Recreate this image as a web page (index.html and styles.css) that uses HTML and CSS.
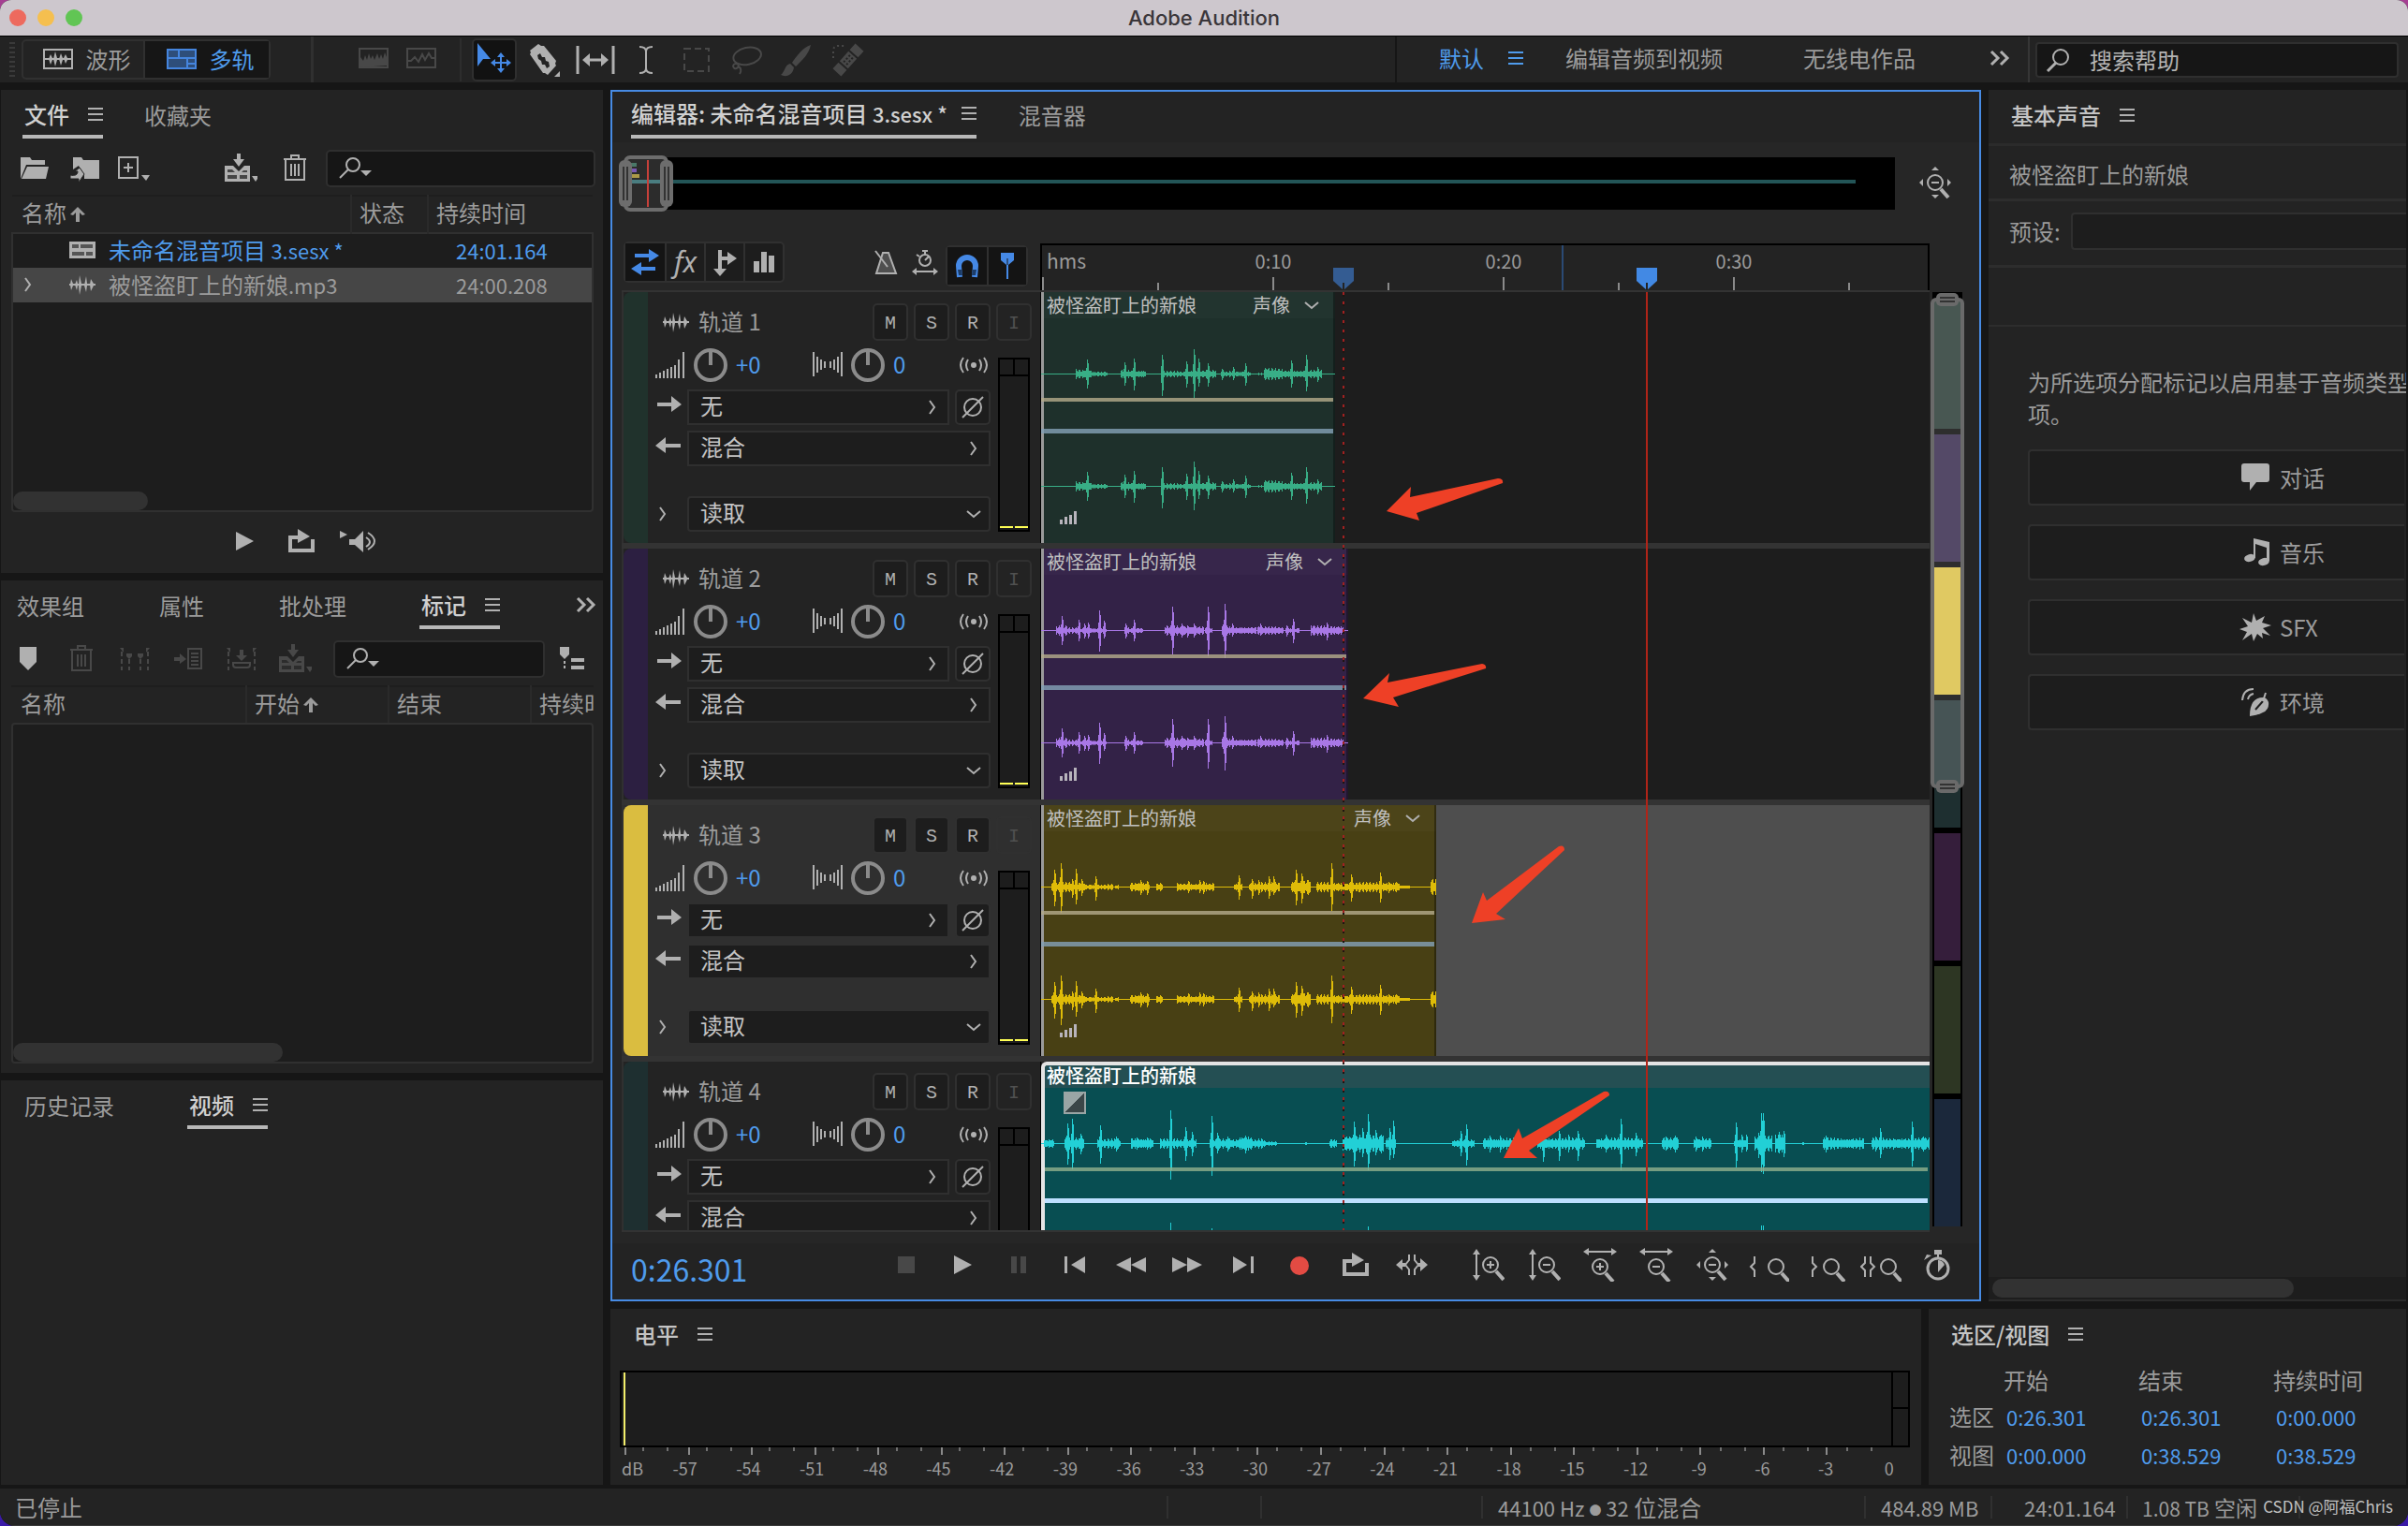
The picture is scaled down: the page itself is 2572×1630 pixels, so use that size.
FILE: index.html
```html
<!DOCTYPE html>
<html lang="zh-CN">
<head>
<meta charset="utf-8">
<title>Adobe Audition</title>
<link rel="stylesheet" href="styles.css">
<script src="app.js" defer></script>
</head>
<body>
<svg class="sprite" aria-hidden="true">
  <symbol id="menu" viewBox="0 0 16 14"><path d="M0 1h16M0 7h16M0 13h16" stroke="currentColor" stroke-width="2"/></symbol>
  <symbol id="more" viewBox="-18 -18 36 36"><path d="M-9-7l7 7-7 7M1-7l7 7-7 7" fill="none" stroke="currentColor" stroke-width="3"/></symbol>
  <symbol id="wave" viewBox="-18 -18 36 36"><path d="M-14-1h28v2h-28zM-12-6l2 5v2l-2 5-1-6zM-6-5l1 4v2l-1 5-2-6zM-3-10l2 9v2l-2 10-1-10zM4-9l1 8v2l-1 7-2-7zM9-6l3 5v2l-3 6-1-7z"/></symbol>
  <symbol id="waveform" viewBox="-18 -18 36 36"><path d="M-15-10h30v20h-30z" fill="none" stroke="currentColor" stroke-width="2"/><path d="M-14-1h28v2h-28zM-8-5l2 4v2l-2 5-2-6zM-3-8l2 7v2l-2 7-2-8zM3-6l2 5v2l-2 6-2-7zM8-5l2 4v2l-2 4-2-6z"/></symbol>
  <symbol id="multi" viewBox="-18 -18 36 36"><path d="M-15-10h30v20h-30z" fill="currentColor" fill-opacity=".5" stroke="currentColor" stroke-width="2"/><path d="M-15-1h30M-3-10v9M6 0v10M6 5h9" fill="none" stroke="currentColor" stroke-width="2"/></symbol>
  <symbol id="session" viewBox="-18 -18 36 36"><path d="M-14-9h28v18h-28z"/><path d="M-11-6h7v4h-7zM-2-6h13v4h-13zM-11 2h13v4h-13zM4 2h7v4h-7z" fill="#555"/></symbol>
  <symbol id="spectral" viewBox="-18 -18 36 36"><path d="M-15-10h30v20h-30z" fill="none" stroke="currentColor" stroke-width="2"/><path d="M-14 10V-1l3 4 2-6 2 5 2-7 2 6 2-4 2 5 3-7 2 6 2-5 2 5 2-7 2 5v9z"/></symbol>
  <symbol id="pitch" viewBox="-18 -18 36 36"><path d="M-15-10h30v20h-30z" fill="none" stroke="currentColor" stroke-width="2"/><path d="M-14 3h3l4-4 4 5 4-8 3 6 4-7 3 5h3" fill="none" stroke="currentColor" stroke-width="2"/></symbol>
  <symbol id="move" viewBox="-18 -18 36 36"><path d="M-18-18L-4-1h-8l-6 8z"/><path d="M7-8l4 5H8v5h5v-3l5 4-5 4V4H8v5h3l-4 5-4-5h3V4H1v3l-5-4 5-4v3h5v-5H3z"/></symbol>
  <symbol id="razor" viewBox="-18 -18 36 36"><path d="M-7-17l3 2 3 0 13 16-1 3 1 2-9 10-3-2h-2l-14-20 1-2-1-2z"/><path d="M-8-5l3-2 2 4h3l1 4 3 1 1 5-3 2-2-4h-3l-1-4-3-2z" fill="#232323"/><path d="M16 12v7h-7z"/></symbol>
  <symbol id="slip" viewBox="-22 -18 44 36"><path d="M-19-15v30M19-15v30M-10 0h20" stroke="currentColor" stroke-width="3"/><path d="M-14 0l8-7v14zM14 0l-8-7v14z"/></symbol>
  <symbol id="ibeam" viewBox="-18 -18 36 36"><path d="M-7-14c5 0 7 2 7 5V9c0 3-2 5-7 5M7-14c-5 0-7 2-7 5V9c0 3 2 5 7 5" fill="none" stroke="currentColor" stroke-width="2"/></symbol>
  <symbol id="marquee" viewBox="-18 -18 36 36"><path d="M-13-12h26v24h-26z" fill="none" stroke="currentColor" stroke-width="2" stroke-dasharray="7 4"/></symbol>
  <symbol id="lasso" viewBox="-18 -18 36 36"><ellipse cx="1" cy="-4" rx="15" ry="9" transform="rotate(-12)" fill="none" stroke="currentColor" stroke-width="2"/><path d="M-15 6c2-4 8-1 5 2s-5 0-5-2m5 1c4 1 4 5 2 8" fill="none" stroke="currentColor" stroke-width="2"/></symbol>
  <symbol id="brush" viewBox="-18 -18 36 36"><path d="M14-16C6-14-2-3-6 3l4 4C5 0 12-6 14-16zM-8 4c-6 1-5 8-10 12 6 3 13 0 14-8z"/></symbol>
  <symbol id="heal" viewBox="-18 -18 36 36"><g transform="rotate(42)"><path d="M-6-18H6v9H-6zM-6-7H6V7H-6zM-6 9H6v9H-6z"/><path d="M-3-4h2m2 0h2M-3 0h2m2 0h2M-3 4h2m2 0h2" stroke="#232323" stroke-width="2"/></g><path d="M-16-2v-9q1-4 5-4h7" fill="none" stroke="currentColor" stroke-width="2" stroke-dasharray="2 3"/></symbol>
  <symbol id="find" viewBox="-18 -18 36 36"><circle cx="3" cy="-3" r="8" fill="none" stroke="currentColor" stroke-width="2"/><path d="M-2 3l-9 9" stroke="currentColor" stroke-width="3"/></symbol>
  <symbol id="findmenu" viewBox="-18 -18 36 36"><circle cx="-3" cy="-4" r="7" fill="none" stroke="currentColor" stroke-width="2"/><path d="M-8 1l-9 9" stroke="currentColor" stroke-width="2"/><path d="M5 2h12l-6 6z"/></symbol>
  <symbol id="open" viewBox="-18 -18 36 36"><path d="M-15 11v-23h10l2 3h14v5h-20zM-8-2h23l-3 13h-26z"/></symbol>
  <symbol id="import" viewBox="-18 -18 36 36"><path d="M-12-12h9l2 3h17v20H0V7L-6-3l-6 4z"/><path d="M-15 7c5 1 8 0 8-4l-3 0 5-4 5 7-6 9V11h-9z" stroke="#232323"/></symbol>
  <symbol id="new" viewBox="-18 -18 36 36"><path d="M-16-12h20v22h-20zM-6-6V4M-11-1h10" fill="none" stroke="currentColor" stroke-width="2"/><path d="M8 7h9l-4 6z"/></symbol>
  <symbol id="insert" viewBox="-18 -18 36 36"><path d="M-17-3h9l6 6 6-6h6v17h-27z"/><path d="M-4-16h4v6h4l-6 8-6-8h4z"/><path d="M-14 1h5l3 3h-8zM3 2h4v2H1zM-14 7H-4v4h-10zM-1 7h8v4h-8z" fill="#232323" fill-opacity=".75"/><path d="M12 8h8l-4 6z"/></symbol>
  <symbol id="trash" viewBox="-18 -18 36 36"><path d="M-12-10h24M-10-9v21h20V-9M-4-11v-3h8v3M-4-5V8M0-5V8M4-5V8" fill="none" stroke="currentColor" stroke-width="2"/></symbol>
  <symbol id="sortup" viewBox="0 0 16 16"><path d="M8 0l8 8-3 1-3-3v10H6V6L3 9 0 8z"/></symbol>
  <symbol id="play" viewBox="-18 -18 36 36"><path d="M-9-10L10 0-9 10z"/></symbol>
  <symbol id="loop" viewBox="-18 -18 36 36"><path d="M-12-4H-2M12-2v12h-24V-6" fill="none" stroke="currentColor" stroke-width="4"/><path d="M-4-13l13 8L-4 2z"/></symbol>
  <symbol id="autoplay" viewBox="-22 -18 44 36"><path d="M-20-11l8 4-8 4zM-10-2h6l9-9v23l-9-8h-6z"/><path d="M8-4q8 5 0 10M10-9q14 9 0 18" fill="none" stroke="currentColor" stroke-width="2"/></symbol>
  <symbol id="marker" viewBox="-18 -18 36 36"><path d="M-9-13H9V3L0 12-9 3z"/></symbol>
  <symbol id="mergemk" viewBox="-18 -18 36 36"><path d="M-14-8v20M14-8v20M-6 0v12M6 0v12" stroke="currentColor" stroke-width="2" stroke-dasharray="5 3"/><path d="M-16-12h4v5zM16-12h-4v5zM-9-6h6v3l-3 3-3-3zM3-6h6v3L6 0 3-3z"/></symbol>
  <symbol id="addlist" viewBox="-18 -18 36 36"><path d="M0-11h14v21H0zM3-6h8M3-2h8M3 2h8M3 6h8" fill="none" stroke="currentColor" stroke-width="2"/><path d="M-15-2h6v-4l7 6-7 5V2h-6z"/></symbol>
  <symbol id="export" viewBox="-18 -18 36 36"><path d="M-14-8v20M14-8v20" stroke="currentColor" stroke-width="2" stroke-dasharray="5 3"/><path d="M-16-12h4v5zM16-12h-4v5zM-2-10h4v6h4l-6 6-6-6h4z"/><path d="M-9 4v2q0 3 3 3H6q3 0 3-3V4z" fill="none" stroke="currentColor" stroke-width="2"/></symbol>
  <symbol id="mklist" viewBox="-18 -18 36 36"><path d="M-13-13h10v8l-5 5-5-5z"/><path d="M-8 2v10" stroke="currentColor" stroke-width="2" stroke-dasharray="3 2"/><path d="M-1 1h14M-1 9h14" stroke="currentColor" stroke-width="4"/></symbol>
  <symbol id="io" viewBox="-18 -18 36 36"><path d="M-11-9H4v-5l11 7L4 0v-5h-15zM11 5H-4V0l-11 7 11 7V9h15z"/></symbol>
  <symbol id="sends" viewBox="-18 -18 36 36"><path d="M-7-13h4v7h6v-5l10 7L3 3v-5h-6v9h5L-5 15l-7-8h5z"/></symbol>
  <symbol id="bars" viewBox="-18 -18 36 36"><path d="M-11-1h6v12h-6zM-3-11h6v22h-6zM5-7h6v18H5z"/></symbol>
  <symbol id="metronome" viewBox="-18 -18 36 36"><path d="M-4-12h6l8 22h-21z" fill="currentColor" fill-opacity=".3" stroke="currentColor" stroke-width="2"/><path d="M-12-14L1 3" stroke="currentColor" stroke-width="2"/></symbol>
  <symbol id="stretch" viewBox="-18 -18 36 36"><circle cy="-4" r="6" fill="none" stroke="currentColor" stroke-width="2"/><path d="M-3-14h6M0-14v4M0-4l4-4M-9-10l3 2M-10 8h20" stroke="currentColor" stroke-width="2"/><path d="M-14 8l5-4v8zM14 8l-5-4v8z"/></symbol>
  <symbol id="magnet" viewBox="-18 -18 36 36"><path d="M-8 12L-9 0a9 9 0 0 1 18 0L8 12" fill="none" stroke="currentColor" stroke-width="6"/><path d="M-10 4h4l1 6h-4zM10 4H6L5 10h4z" fill="#1d3d68"/></symbol>
  <symbol id="pin" viewBox="-18 -18 36 36"><path d="M-7-14H7v8L1-1v15h-2V-1l-6-5z"/><path d="M0-8v7" stroke="#161616"/></symbol>
  <symbol id="vol" viewBox="-18 -18 36 36"><path d="M-15 10v4M-11 8v6M-7 6v8M-3 4v10M1 2v12M5 0v14M9-6v20M14-14v28" stroke="currentColor" stroke-width="2"/></symbol>
  <symbol id="pan" viewBox="-18 -18 36 36"><path d="M-15-14v26M-11-9v17M-7-6v11M-3-4v7M3-4v7M7-6v11M11-9v17M15-14v26" stroke="currentColor" stroke-width="2"/></symbol>
  <symbol id="knob" viewBox="-18 -18 36 36"><circle r="16" fill="none" stroke="#8b8b8b" stroke-width="4"/><path d="M0-16V0" stroke="#8b8b8b" stroke-width="4"/></symbol>
  <symbol id="mono" viewBox="-18 -18 36 36"><circle r="3"/><path d="M-6-6q-4 6 0 12M6-6q4 6 0 12M-11-8q-6 8 0 16M11-8q6 8 0 16" fill="none" stroke="currentColor" stroke-width="2"/></symbol>
  <symbol id="right" viewBox="-18 -18 36 36"><path d="M-13-2H2v-7L13 0 2 8V2h-15z"/></symbol>
  <symbol id="left" viewBox="-18 -18 36 36"><path d="M12-2H-4v-7L-15 0-4 8V2h16z"/></symbol>
  <symbol id="phase" viewBox="-18 -18 36 36"><circle r="9" fill="none" stroke="currentColor" stroke-width="2"/><path d="M-11 11L11-11" stroke="currentColor" stroke-width="2"/></symbol>
  <symbol id="chevr" viewBox="-8 -8 16 16"><path d="M-3-7l5 7-5 7" fill="none" stroke="currentColor" stroke-width="2"/></symbol>
  <symbol id="chevd" viewBox="-8 -8 16 16"><path d="M-7-3l7 6 7-6" fill="none" stroke="currentColor" stroke-width="2"/></symbol>
  <symbol id="signal" viewBox="0 0 18 14"><path d="M0 9h3v5H0zM5 6h3v8H5zM10 4h3v10h-3zM15 0h3v14h-3z"/></symbol>
  <symbol id="stop" viewBox="-18 -18 36 36"><path d="M-9-9H9V9H-9z"/></symbol>
  <symbol id="pause" viewBox="-18 -18 36 36"><path d="M-8-9h6V9h-6zM2-9h6V9H2z"/></symbol>
  <symbol id="prev" viewBox="-18 -18 36 36"><path d="M-11-9h3V9h-3zM11-9V9L-4 0z"/></symbol>
  <symbol id="next" viewBox="-18 -18 36 36"><path d="M11-9H8V9h3zM-11-9V9L4 0z"/></symbol>
  <symbol id="rew" viewBox="-18 -18 36 36"><path d="M-16 0L0-8V8zM0 0l16-8V8z"/></symbol>
  <symbol id="fwd" viewBox="-18 -18 36 36"><path d="M16 0L0-8V8zM0 0l-16-8V8z"/></symbol>
  <symbol id="rec" viewBox="-18 -18 36 36"><circle cy="1" r="10"/></symbol>
  <symbol id="skip" viewBox="-18 -18 36 36"><path d="M-3-11v6l-4 5 4 5v6M3-11v6l4 5-4 5v6" fill="none" stroke="currentColor" stroke-width="2"/><path d="M-17 0l7-6v4h3v4h-3v4zM17 0L9-7v5H7v4h2v5z"/></symbol>
  <symbol id="mag" viewBox="-18 -18 36 36"><circle r="8" fill="none" stroke="currentColor" stroke-width="2"/><path d="M6 7l8 9" stroke="currentColor" stroke-width="4"/></symbol>
  <symbol id="zvin" viewBox="-18 -18 36 36"><use href="#mag" x="-15" y="-18" width="36" height="36"/><path d="M3-4v8M-1 0h8M-12-13v26" stroke="currentColor" stroke-width="2"/><path d="M-12-17l4 6h-8zM-12 17l4-6h-8z"/></symbol>
  <symbol id="zvout" viewBox="-18 -18 36 36"><use href="#mag" x="-15" y="-18" width="36" height="36"/><path d="M-1 0h8M-12-13v26" stroke="currentColor" stroke-width="2"/><path d="M-12-17l4 6h-8zM-12 17l4-6h-8z"/></symbol>
  <symbol id="zhin" viewBox="-18 -18 36 36"><use href="#mag" x="-18" y="-16" width="36" height="36"/><path d="M0-2v8M-4 2h8M-13-14h26" stroke="currentColor" stroke-width="2"/><path d="M-18-14l6-4v8zM18-14l-6-4v8z"/></symbol>
  <symbol id="zhout" viewBox="-18 -18 36 36"><use href="#mag" x="-18" y="-16" width="36" height="36"/><path d="M-4 2h8M-13-14h26" stroke="currentColor" stroke-width="2"/><path d="M-18-14l6-4v8zM18-14l-6-4v8z"/></symbol>
  <symbol id="zfull" viewBox="-18 -18 36 36"><use href="#mag" x="-18" y="-18" width="36" height="36"/><path d="M-4 0h8" stroke="currentColor" stroke-width="2"/><path d="M0-17l4 4h-8zM0 17l4-4h-8zM-17 0l4-4v8zM17 0l-4-4v8z"/></symbol>
  <symbol id="zin" viewBox="-22 -18 44 36"><use href="#mag" x="-10" y="-16" width="36" height="36"/><path d="M-15-9v7l-4 4 4 4v7" fill="none" stroke="currentColor" stroke-width="2"/></symbol>
  <symbol id="zoutp" viewBox="-22 -18 44 36"><use href="#mag" x="-11" y="-16" width="36" height="36"/><path d="M-13-9v7l4 4-4 4v7" fill="none" stroke="currentColor" stroke-width="2"/></symbol>
  <symbol id="zsel" viewBox="-22 -18 44 36"><use href="#mag" x="-10" y="-16" width="36" height="36"/><path d="M-17-9v7l-4 4 4 4v7M-11-9v7l4 4-4 4v7" fill="none" stroke="currentColor" stroke-width="2"/></symbol>
  <symbol id="timer" viewBox="-18 -18 36 36"><circle cx="1" cy="4" r="11" fill="none" stroke="currentColor" stroke-width="3"/><path d="M-3-16h8v5H2v4H0v-4h-3zM-14-5l3-6 5 1zM1 8v-13q5 0 7 5z"/></symbol>
  <symbol id="speech" viewBox="-18 -18 36 36"><path d="M-12-15h24q3 0 3 3V2q0 3-3 3H1l-7 9V5h-6q-3 0-3-3v-14q0-3 3-3z"/></symbol>
  <symbol id="music" viewBox="-18 -18 36 36"><path d="M-2-15l17 4V9h-3V-5L0-9V6h-2z"/><ellipse cx="-6" cy="6" rx="6" ry="4" transform="rotate(-15 -6 6)"/><ellipse cx="9" cy="10" rx="6" ry="4" transform="rotate(-15 9 10)"/></symbol>
  <symbol id="burst" viewBox="-18 -18 36 36"><path d="M-2-15l3 8 9-5-3 7 10 3-9 3 8 8-9-3 1 6-6-5-4 8-2-8-10 7 5-9-8-3 9-3-6-9 10 5z"/></symbol>
  <symbol id="leaf" viewBox="-18 -18 36 36"><path d="M-6 15Q-6-5 8-5q4 0 6 5 1 8-6 11-5 3-14 4z"/><path d="M0 8l8-9" stroke="#1d1d1d" stroke-width="2"/><path d="M8-1l3-9M-14-2Q-13-14-2-14M-8-3q1-5 6-6" fill="none" stroke="currentColor" stroke-width="2"/></symbol>
</svg>

<div class="app">
  <header class="titlebar">
    <div class="lights"><i></i><i></i><i></i></div>
    <h1>Adobe Audition</h1>
  </header>

  <nav class="topbar">
    <span class="grip"></span>
    <div class="modes">
      <button class="mode"><svg class="i"><use href="#waveform"/></svg>波形</button>
      <button class="mode on"><svg class="i"><use href="#multi"/></svg>多轨</button>
    </div>
    <div class="views dim">
      <button class="tool"><svg class="i"><use href="#spectral"/></svg></button>
      <button class="tool"><svg class="i"><use href="#pitch"/></svg></button>
    </div>
    <div class="tools">
      <button class="tool on"><svg class="i"><use href="#move"/></svg></button>
      <button class="tool"><svg class="i"><use href="#razor"/></svg></button>
      <button class="tool"><svg class="i wide"><use href="#slip"/></svg></button>
      <button class="tool"><svg class="i"><use href="#ibeam"/></svg></button>
      <button class="tool dim"><svg class="i"><use href="#marquee"/></svg></button>
      <button class="tool dim"><svg class="i"><use href="#lasso"/></svg></button>
      <button class="tool dim"><svg class="i"><use href="#brush"/></svg></button>
      <button class="tool dim"><svg class="i"><use href="#heal"/></svg></button>
    </div>
    <div class="spaces">
      <a href="#" class="on">默认 <svg class="m"><use href="#menu"/></svg></a>
      <a href="#">编辑音频到视频</a>
      <a href="#">无线电作品</a>
      <button class="tool"><svg class="i"><use href="#more"/></svg></button>
    </div>
    <label class="help"><svg class="i"><use href="#find"/></svg><input type="text" placeholder="搜索帮助" aria-label="搜索帮助"></label>
  </nav>

  <main class="main">
    <aside class="side">
      <section class="panel files">
        <div class="tabs"><a href="#" class="tab on">文件 <svg class="m"><use href="#menu"/></svg></a><a href="#" class="tab">收藏夹</a></div>
        <div class="bar">
          <button><svg class="i"><use href="#open"/></svg></button>
          <button><svg class="i"><use href="#import"/></svg></button>
          <button><svg class="i"><use href="#new"/></svg></button>
          <button class="push"><svg class="i"><use href="#insert"/></svg></button>
          <button><svg class="i"><use href="#trash"/></svg></button>
          <label class="search"><svg class="i"><use href="#findmenu"/></svg><input type="text" aria-label="搜索文件"></label>
        </div>
        <table class="list">
          <thead><tr><th class="c-name">名称<svg class="s"><use href="#sortup"/></svg></th><th class="c-state">状态</th><th>持续时间</th></tr></thead>
          <tbody>
            <tr class="cur"><td><span class="fname"><span class="twist"></span><svg class="i"><use href="#session"/></svg><span>未命名混音项目 <span class="num">3.sesx *</span></span></span></td><td></td><td class="num time">24:01.164</td></tr>
            <tr class="sel"><td><span class="fname"><span class="twist"><svg class="c"><use href="#chevr"/></svg></span><svg class="i"><use href="#wave"/></svg><span>被怪盗盯上的新娘<span class="num">.mp3</span></span></span></td><td></td><td class="num time">24:00.208</td></tr>
          </tbody>
        </table>
        <div class="well"><span class="thumb"></span></div>
        <div class="preview">
          <button><svg class="i"><use href="#play"/></svg></button>
          <button><svg class="i"><use href="#loop"/></svg></button>
          <button><svg class="i wide"><use href="#autoplay"/></svg></button>
        </div>
      </section>

      <section class="panel marks">
        <div class="tabs"><a href="#" class="tab">效果组</a><a href="#" class="tab">属性</a><a href="#" class="tab">批处理</a><a href="#" class="tab on">标记 <svg class="m"><use href="#menu"/></svg></a><button class="over"><svg class="i"><use href="#more"/></svg></button></div>
        <div class="bar">
          <button><svg class="i"><use href="#marker"/></svg></button>
          <button class="dim"><svg class="i"><use href="#trash"/></svg></button>
          <button class="dim"><svg class="i"><use href="#mergemk"/></svg></button>
          <button class="dim"><svg class="i"><use href="#addlist"/></svg></button>
          <button class="dim"><svg class="i"><use href="#export"/></svg></button>
          <button class="dim"><svg class="i"><use href="#insert"/></svg></button>
          <label class="search"><svg class="i"><use href="#findmenu"/></svg><input type="text" aria-label="搜索标记"></label>
          <button class="last"><svg class="i"><use href="#mklist"/></svg></button>
        </div>
        <table class="list">
          <thead><tr><th class="m-name">名称</th><th class="m-col">开始<svg class="s"><use href="#sortup"/></svg></th><th class="m-col">结束</th><th>持续时间</th></tr></thead>
        </table>
        <div class="well closed"><span class="thumb long"></span></div>
      </section>

      <section class="panel video">
        <div class="tabs"><a href="#" class="tab">历史记录</a><a href="#" class="tab on">视频 <svg class="m"><use href="#menu"/></svg></a></div>
      </section>
    </aside>

    <section class="panel editor">
      <div class="tabs"><a href="#" class="tab on"><span>编辑器: 未命名混音项目 <span class="num">3.sesx *</span></span> <svg class="m"><use href="#menu"/></svg></a><a href="#" class="tab">混音器</a></div>
      <div class="overview">
        <div class="map">
          <span class="mapline"></span>
          <svg class="handle" viewBox="0 0 58 60"><rect x="7" y="2" width="44" height="56" rx="5" fill="#2c2c2c" stroke="#6d6d6d" stroke-width="4"/><path d="M13 8h6v4h-6z" fill="#4a7868"/><path d="M13 14h6v4h-6z" fill="#7a58b4"/><path d="M13 20h9v4h-9z" fill="#ac9a48"/><path d="M13 26h31v4H13z" fill="#4a7d80"/><path d="M31 5v50" stroke="#c8403a" stroke-width="2"/><rect x="0" y="5" width="14" height="50" rx="6" fill="#6d6d6d"/><rect x="44" y="5" width="14" height="50" rx="6" fill="#6d6d6d"/><path d="M5 12v36M9 12v36M49 12v36M53 12v36" stroke="#333" stroke-width="2"/></svg>
        </div>
        <button class="fit"><svg class="i"><use href="#zfull"/></svg></button>
      </div>

      <div class="work">
        <div class="toggles">
          <div class="group">
            <button class="on"><svg class="i"><use href="#io"/></svg></button>
            <button class="fx">fx</button>
            <button><svg class="i"><use href="#sends"/></svg></button>
            <button><svg class="i"><use href="#bars"/></svg></button>
          </div>
          <div class="plain">
            <button><svg class="i"><use href="#metronome"/></svg></button>
            <button><svg class="i"><use href="#stretch"/></svg></button>
          </div>
          <div class="group snap">
            <button class="on"><svg class="i"><use href="#magnet"/></svg></button>
            <button class="on"><svg class="i"><use href="#pin"/></svg></button>
          </div>
        </div>
        <div class="ruler">
          <span class="unit">hms</span>
          <div class="stamps"><span>0:10</span><span>0:20</span><span>0:30</span></div>
          <span class="ghost"></span>
          <svg class="flag old" viewBox="0 0 22 24"><path d="M0 0h22v14L11 24 0 14z"/><path d="M11 16v8" stroke="#232323" stroke-width="2"/></svg>
          <svg class="flag now" viewBox="0 0 22 24"><path d="M0 0h22v14L11 24 0 14z"/><path d="M11 16v8" stroke="#232323" stroke-width="2"/></svg>
        </div>
        <div class="tracks" id="tracks">
          <span class="dash"></span><span class="playhead"></span>
          <svg class="notes" viewBox="1111 312 949 1002"><path d="M1481 546l26-26-1 11 94-20q6 0 5 5l-92 32 3 8zM1456 746l28-27-2 10 101-20q5 1 4 5l-99 31 6 10zM1572 986l12-33 4 9 77-58q6-2 6 4l-73 68 10 6zM1606 1237l16-32 4 11 87-50q6-1 6 4l-86 59 9 8z"/></svg>
        </div>
        <div class="navi">
          <i class="t1"></i><i class="t2"></i><i class="t3"></i><i class="t4"></i><i class="t5"></i><i class="t6"></i><i class="t7"></i>
          <span class="frame"></span>
        </div>
      </div>

      <div class="transport">
        <output class="clock">0:26.301</output>
        <div class="keys">
          <button class="dim"><svg class="i"><use href="#stop"/></svg></button>
          <button><svg class="i"><use href="#play"/></svg></button>
          <button class="dim"><svg class="i"><use href="#pause"/></svg></button>
          <button><svg class="i"><use href="#prev"/></svg></button>
          <button><svg class="i"><use href="#rew"/></svg></button>
          <button><svg class="i"><use href="#fwd"/></svg></button>
          <button><svg class="i"><use href="#next"/></svg></button>
          <button class="rec"><svg class="i"><use href="#rec"/></svg></button>
          <button><svg class="i"><use href="#loop"/></svg></button>
          <button><svg class="i"><use href="#skip"/></svg></button>
        </div>
        <div class="keys">
          <button><svg class="i"><use href="#zvin"/></svg></button>
          <button><svg class="i"><use href="#zvout"/></svg></button>
          <button><svg class="i"><use href="#zhin"/></svg></button>
          <button><svg class="i"><use href="#zhout"/></svg></button>
          <button><svg class="i"><use href="#zfull"/></svg></button>
          <button><svg class="i wide"><use href="#zin"/></svg></button>
          <button><svg class="i wide"><use href="#zoutp"/></svg></button>
          <button><svg class="i wide"><use href="#zsel"/></svg></button>
          <button><svg class="i"><use href="#timer"/></svg></button>
        </div>
      </div>
    </section>

    <section class="panel sound">
      <div class="tabs"><span class="tab title">基本声音 <svg class="m"><use href="#menu"/></svg></span></div>
      <p class="clipname">被怪盗盯上的新娘</p>
      <div class="preset"><label for="preset">预设:</label><select id="preset"><option></option></select></div>
      <div class="blank"></div>
      <div class="assign">
        <p>为所选项分配标记以启用基于音频类型<br>项。</p>
        <button><svg class="i"><use href="#speech"/></svg>对话</button>
        <button><svg class="i"><use href="#music"/></svg>音乐</button>
        <button><svg class="i"><use href="#burst"/></svg>SFX</button>
        <button><svg class="i"><use href="#leaf"/></svg>环境</button>
      </div>
      <div class="hscroll"><span></span></div>
    </section>

    <div class="bottom">
      <section class="panel levels">
        <div class="tabs"><span class="tab title">电平 <svg class="m"><use href="#menu"/></svg></span></div>
        <div class="meter"><span class="low"></span><span class="clipcell"></span><span class="clipcell b"></span></div>
        <div class="db" id="db"></div>
      </section>
      <section class="panel range">
        <div class="tabs"><span class="tab title">选区/视图 <svg class="m"><use href="#menu"/></svg></span></div>
        <table>
          <thead><tr><td></td><th>开始</th><th>结束</th><th>持续时间</th></tr></thead>
          <tbody>
            <tr><th>选区</th><td>0:26.301</td><td>0:26.301</td><td>0:00.000</td></tr>
            <tr><th>视图</th><td>0:00.000</td><td>0:38.529</td><td>0:38.529</td></tr>
          </tbody>
        </table>
      </section>
    </div>
  </main>

  <footer class="status">
    <span class="state">已停止</span>
    <span class="cell a"></span><span class="cell b"></span>
    <span class="cell fmt"><span class="num">44100 Hz <span class="dot">●</span> 32</span> 位混合</span>
    <span class="cell size num">484.89 MB</span>
    <span class="cell dur num">24:01.164</span>
    <span class="cell disk"><span class="num">1.08 TB</span> 空闲</span>
    <span class="cell end"></span>
    <span class="mark">CSDN @阿福Chris</span>
  </footer>
</div>
</body>
</html>
```
FILE: styles.css
```css
:root {
  --panel: #232323;
  --gap: #161616;
  --well: #1d1d1d;
  --line: #303030;
  --text: #9b9b9b;
  --icon: #b0b0b0;
  --blue: #4f9bec;
}
* { box-sizing: border-box; }
body {
  margin: 0;
  background: linear-gradient(#a53f92, #3a1aa8);
  color: var(--text);
  font: 24px/36px "Noto Sans CJK SC", "Noto Sans", sans-serif;
}
button, input, select { font: inherit; color: inherit; margin: 0; padding: 0; border: 0; background: none; border-radius: 0; }
button { display: flex; align-items: center; justify-content: center; color: var(--icon); white-space: nowrap; }
select { appearance: none; width: 100%; }
a { color: inherit; text-decoration: none; }
p { margin: 0; }
table { border-collapse: collapse; table-layout: fixed; width: 100%; }
th { font-weight: 400; text-align: left; padding: 0; }
td { padding: 0; }
svg { display: block; fill: currentColor; flex: none; }
.sprite { position: absolute; width: 0; height: 0; }
.i { width: 36px; height: 36px; color: inherit; overflow: visible; }
.i.wide { width: 44px; }
.m { width: 16px; height: 14px; color: var(--icon); }
.c { width: 16px; height: 16px; color: var(--icon); }
.s { width: 16px; height: 16px; display: inline-block; margin-left: 4px; }
.num { font-size: 22px; }
button.dim, .dim button { color: #484848; }

.app {
  height: 100vh;
  display: grid;
  grid-template-rows: 39px 49px minmax(0, 1fr) 40px;
  background: var(--gap);
  border-radius: 12px 12px 16px 16px;
  overflow: hidden;
  position: relative;
}
.titlebar {
  background: #cdc7cd;
  border-bottom: 1px solid #000;
  display: grid;
  grid-template-columns: 1fr auto 1fr;
  align-items: center;
  color: #3a363a;
}
.titlebar h1 { margin: 0; font: 500 22px/36px Inter, sans-serif; }
.lights { display: flex; gap: 12px; padding-left: 10px; }
.lights i { width: 18px; height: 18px; border-radius: 50%; background: #ed6a5e; }
.lights i:nth-child(2) { background: #f5bf4f; }
.lights i:nth-child(3) { background: #61c554; }

.topbar { background: var(--panel); display: flex; align-items: center; }
.grip { width: 6px; height: 38px; margin: 0 7px 0 10px; background: repeating-linear-gradient(#3a3a3a 0 2px, transparent 2px 5px); }
.modes { display: flex; border: 2px solid var(--line); border-radius: 5px; height: 43px; }
.mode { width: 130px; gap: 12px; padding: 0 0 2px 5px; color: var(--text); border-right: 2px solid var(--line); }
.mode .i { color: var(--icon); }
.mode.on { width: 132px; background: var(--gap); color: var(--blue); border: 0; }
.mode.on .i { color: #4585de; }
.views { display: flex; border-left: 3px solid #303030; height: 49px; align-items: center; margin-left: 43px; padding: 0 0 3px 38px; width: 159px; }
.views .tool { width: 51px; }
.tool { width: 54px; height: 46px; flex: none; }
.tools { display: flex; border-left: 2px solid #2d2d2d; padding-left: 11px; }
.tools .on { width: 48px; margin-right: 3px; background: #121212; border: 2px solid #2f2f2f; border-radius: 5px; color: #4589e6; }
.spaces { margin-left: auto; display: flex; align-items: center; height: 49px; border-left: 2px solid var(--gap); padding: 0 0 3px 45px; border-right: 2px solid #363636; }
.spaces a { display: flex; align-items: center; }
.spaces a:nth-child(1) { gap: 26px; margin-right: 45px; color: var(--blue); }
.spaces a:nth-child(1) .m { color: var(--blue); }
.spaces a:nth-child(2) { margin-right: 86px; }
.spaces a:nth-child(3) { margin-right: 63px; }
.spaces .tool { margin-right: 3px; }
.help { width: 388px; height: 38px; margin: 0 10px 0 6px; display: flex; align-items: center; background: var(--gap); border: 2px solid #2f2f2f; border-radius: 4px; color: var(--icon); padding-left: 4px; }
.help input { margin-left: 16px; width: 300px; }
.help input::placeholder { color: #b4b4b4; opacity: 1; }

.main {
  display: grid;
  grid-template-columns: 643px minmax(0, 1fr) 446px;
  grid-template-rows: minmax(0, 1fr) 188px;
  gap: 8px;
  padding: 8px 2px 4px 1px;
}
.side { grid-row: 1 / 3; display: grid; grid-template-rows: 516px 526px 1fr; gap: 8px; min-width: 0; }
.panel { background: var(--panel); min-width: 0; display: flex; flex-direction: column; }
.tabs { display: flex; height: 56px; flex: none; }
.tab { display: flex; align-items: center; gap: 20px; height: 52px; padding-top: 2px; white-space: nowrap; }
.tab.on { color: #d0d0d0; font-weight: 500; border-bottom: 4px solid #b8b8b8; padding: 4px 0 0 2px; }
.tab.title { color: #c4c4c4; font-weight: 500; }
.files .tabs { padding-left: 23px; gap: 44px; }
.bar { display: flex; align-items: center; height: 56px; padding-left: 9px; }
.bar button { width: 53px; height: 40px; }
.bar .push { margin-left: 61px; }
.search { height: 40px; background: var(--gap); border: 2px solid #2f2f2f; border-radius: 5px; display: flex; align-items: center; color: var(--icon); padding-left: 12px; }
.search input { flex: 1; min-width: 0; }
.files .search { width: 288px; margin-left: 1px; }
.files .bar button:nth-child(5) { width: 64px; }

.list { width: 622px; margin-left: 11px; border-top: 2px solid #1e1e1e; }
.list th { height: 38px; padding: 0 0 4px 8px; line-height: 34px; white-space: nowrap; overflow: hidden; border-left: 2px solid #2a2a2a; }
.list th:first-child { border-left: 0; padding-left: 10px; }
.c-name { width: 362px; }
.c-state { width: 82px; }
.list tbody { border: 2px solid var(--line); border-bottom: 0; background: var(--well); }
.list tbody td { height: 37px; line-height: 34px; padding-bottom: 2px; }
.cur { color: var(--blue); }
.sel { background: #464646; }
.fname { display: flex; align-items: center; white-space: nowrap; height: 34px; }
.fname .i { color: var(--icon); margin-right: 10px; }
.twist { width: 56px; padding-left: 8px; }
.list .time { padding-left: 30px; }
.well { flex: 1; width: 622px; margin-left: 11px; border: 2px solid var(--line); border-top: 0; background: var(--well); display: flex; align-items: flex-end; border-radius: 0 0 4px 4px; }
.well.closed { border-top: 2px solid var(--line); border-radius: 4px; margin-bottom: 10px; }
.thumb { width: 144px; height: 20px; border-radius: 10px; background: #323232; }
.thumb.long { width: 288px; }
.preview { height: 65px; display: flex; justify-content: center; align-items: center; gap: 17px; padding: 0 2px 4px 0; }
.preview button { width: 44px; }

.marks .tabs { padding-left: 17px; }
.marks .tab { height: 52px; }
.marks .tab:nth-child(1) { margin-right: 80px; }
.marks .tab:nth-child(2) { margin-right: 80px; }
.marks .tab:nth-child(3) { margin-right: 78px; }
.marks .over { margin-left: auto; height: 52px; }
.marks .bar { padding-left: 0; }
.marks .bar button { width: 57px; }
.marks .search { width: 226px; margin-left: 13px; }
.marks .bar .last { width: 56px; margin-left: 1px; }
.m-name { width: 251px; }
.m-col { width: 152px; }
.video .tabs { padding-left: 25px; gap: 78px; }

.editor { border: 2px solid #478be4; background: #262626; min-height: 0; }
.editor .tabs { background: var(--panel); padding-left: 20px; gap: 45px; height: 54px; }
.editor .tab { height: 50px; padding-top: 0; }
.editor .tab.on { gap: 15px; padding-left: 0; }
.overview { display: flex; padding: 14px 29px 0 7px; height: 74px; }
.map { flex: 1; position: relative; height: 56px; margin: 2px 0 0 8px; background: #000; }
.mapline { position: absolute; left: 0; right: 42px; top: 24px; height: 4px; background: #235557; }
.handle { position: absolute; left: -8px; top: -2px; width: 58px; height: 60px; }
.fit { margin: 9px 0 0 25px; width: 36px; height: 40px; }

.work {
  flex: 1;
  min-height: 0;
  display: grid;
  grid-template-columns: 447px minmax(0, 1fr) 37px;
  grid-template-rows: 86px minmax(0, 1fr);
  padding: 0 16px 12px 10px;
}
.toggles { display: flex; align-items: flex-start; padding: 32px 13px 0 2px; }
.group { display: flex; border: 2px solid #303030; border-radius: 5px; background: #1d1d1d; }
.group button { width: 42px; height: 40px; border-left: 2px solid #303030; }
.group button:first-child { border: 0; }
.group .on { background: #141414; color: #4589e6; }
.group .fx { font: italic 30px/36px "Noto Sans", sans-serif; }
.plain { display: flex; margin-left: auto; padding: 4px 2px 0 0; }
.plain button { width: 41px; height: 40px; }
.snap { margin-top: 4px; }
.ruler {
  position: relative;
  margin-top: 34px;
  border: 2px solid #000;
  border-bottom: 0;
  background:
    repeating-linear-gradient(90deg, #8a8a8a 0 2px, transparent 2px 246px) 0 100% / 100% 16px no-repeat,
    repeating-linear-gradient(90deg, #8a8a8a 0 2px, transparent 2px 123px) 0 100% / 100% 10px no-repeat,
    var(--panel);
}
.unit { position: absolute; left: 5px; top: -2px; font-size: 21px; }
.stamps { display: flex; margin-left: 124px; font-size: 20px; line-height: 34px; }
.stamps span { width: 246px; text-align: center; }
.ghost { position: absolute; left: 555px; top: 0; width: 2px; height: 50px; background: #2b4a74; }
.flag { position: absolute; top: 24px; width: 22px; height: 24px; }
.flag.old { left: 311px; fill: #345c92; }
.flag.now { left: 635px; fill: #4289e4; }

.tracks { grid-column: 1 / 3; position: relative; overflow: hidden; border-bottom: 2px solid #333; border-top: 2px solid #333; background: #333; margin-top: -2px; min-height: 0; }
.track { display: grid; grid-template-columns: 447px minmax(0, 1fr); height: 268px; margin-bottom: 6px; }
.head { display: flex; background: var(--panel); border-left: 2px solid #303030; }
.strip { width: 26px; background: var(--c); border-radius: 8px 0 0 8px; }
.picked .head { background: #2f2f2f; }
.ctl { flex: 1; padding: 12px 9px 12px 8px; }
.row { display: flex; align-items: center; }
.top { gap: 6px; height: 40px; }
.top .i { margin: 0 0 0 4px; color: var(--icon); }
.top label { flex: 1; min-width: 0; }
.top input { width: 160px; display: block; padding-bottom: 2px; }
.btn { width: 38px; height: 40px; border: 2px solid #303030; border-radius: 5px; background: #1d1d1d; font: 20px/20px "Liberation Mono", monospace; flex: none; padding-top: 3px; }
.btn.off { color: #505050; background: none; }
.low-part { display: grid; grid-template-columns: 358px 34px; gap: 8px; }
.mix { height: 52px; }
.mix .i { color: var(--icon); }
.mix .i:first-child { margin-left: -2px; }
.mix span { color: var(--blue); padding-bottom: 2px; }
.mix .k1 { margin: 0 9px 0 7px; }
.mix .v1 { width: 80px; }
.mix .k2 { margin: 0 9px 0 7px; }
.mix .v2 { flex: 1; }
.route { height: 38px; margin-bottom: 6px; color: var(--icon); }
.route.auto { margin: 32px 0 0; }
.arrow { width: 34px; display: flex; }
.arrow .i { margin: -6px 0 0 -3px; }
.pick { position: relative; flex: 1; color: #c4c4c4; }
.pick select { display: block; height: 38px; line-height: 30px; padding: 0 0 4px 12px; border: 2px solid #2f2f2f; background: #1d1d1d; }
.pick .c { position: absolute; right: 10px; top: 11px; pointer-events: none; }
.auto .pick select { border-radius: 4px; }
.route .btn { height: 38px; margin-left: 6px; padding: 0; }
.vu { margin-top: 18px; height: 186px; border: 2px solid #000; background: linear-gradient(#000, #000) 50% 0 / 2px 18px no-repeat, linear-gradient(#000, #000) 0 16px / 100% 2px no-repeat, linear-gradient(90deg, #ffff55 14px, transparent 14px 16px, #ffff55 16px) 0 178px / 100% 2px no-repeat, #1d1d1d; }

.lane { background: #1d1d1d; border-left: 1px solid #000; }
.picked .lane { background: #4e4e4e; }
.clip { position: relative; height: 268px; background: linear-gradient(rgba(255,255,255,.02) 28px, transparent 28px) var(--bg); border-left: 3px solid #9a9a9a; border-right: 2px solid rgba(0,0,0,.35); color: #c0c0c0; }
.cliphead { display: flex; align-items: center; height: 28px; font-size: 20px; line-height: 28px; padding: 0 15px 0 3px; white-space: nowrap; gap: 15px; }
.cliphead b { font-weight: 400; margin-right: auto; }
.wave { position: absolute; left: -3px; top: 28px; height: 240px; color: var(--w); }
.env { position: absolute; left: -3px; right: 0; top: 113px; height: 4px; background: #b2a98a; opacity: .82; }
.env.pan { top: 146px; height: 5px; background: #83a0b4; }
.sig { position: absolute; left: 17px; top: 234px; width: 18px; height: 14px; color: #b8b4bc; }
.chosen .clip { border: 0; border-left: 4px solid #e4e4e4; border-top: 4px solid #e4e4e4; border-radius: 6px 0 0 0; background: linear-gradient(#244f53 24px, transparent 24px) var(--bg); color: #fff; }
.chosen .cliphead { height: 24px; line-height: 22px; padding: 0 0 2px 2px; }
.chosen b { font-weight: 500; }
.chosen .wave { top: 24px; left: -4px; }
.chosen .env { top: 109px; background: #8fae8b; left: 0; right: 2px; }
.chosen .env.pan { top: 142px; background: #bde0ff; opacity: 1; }
.fade { position: absolute; left: 20px; top: 28px; width: 24px; height: 24px; border: 2px solid #9aa5a5; background: linear-gradient(135deg, #9aa5a5 50%, #3b4648 50%); }
.playhead { position: absolute; left: 1094px; top: 0; width: 2px; height: 100%; background: #b02418; z-index: 2; }
.dash { position: absolute; left: 770px; top: 0; width: 2px; height: 100%; background: repeating-linear-gradient(#a02020 0 3px, #201512 3px 5px, transparent 5px 10px); z-index: 2; }
.notes { position: absolute; left: 447px; top: 0; width: 949px; height: 1002px; z-index: 3; fill: #ee4026; }

.navi { position: relative; margin: 0 2px 6px 3px; padding: 10px 2px 0; background: #000; display: flex; flex-direction: column; gap: 6px; }
.navi i { flex: 0 1 136px; }
.t1 { background: #20322c; }
.t2 { background: #2f2146; }
.t3 { background: #dabd40; }
.t4 { background: #1e2f30; }
.t5 { background: #351e3b; }
.t6 { background: #2d3623; }
.t7 { background: #1b283b; }
.frame { position: absolute; left: -2px; right: -2px; top: 6px; height: 524px; border: 4px solid #6a6a6a; border-radius: 6px; background: rgba(255,255,255,.18); }
.frame::before, .frame::after { content: ""; position: absolute; left: 2px; right: 2px; height: 14px; border-radius: 5px; background: linear-gradient(#333, #333) 50% 4px / 16px 2px no-repeat, linear-gradient(#333, #333) 50% 8px / 16px 2px no-repeat, #6a6a6a; }
.frame::before { top: -9px; }
.frame::after { bottom: -9px; }

.transport { height: 60px; flex: none; display: flex; align-items: center; background: var(--panel); padding: 0 15px 14px 20px; }
.clock { font-size: 32px; color: var(--blue); margin-right: auto; padding-top: 8px; }
.keys { display: flex; margin-left: 21px; }
.keys button { width: 60px; height: 40px; }
.keys .rec { color: #e34b43; }

.sound { overflow: hidden; white-space: nowrap; }
.sound .tabs { padding-left: 24px; height: 60px; border-bottom: 3px solid #2b2b2b; }
.clipname { height: 59px; padding: 12px 0 0 22px; border-bottom: 3px solid #2d2d2d; }
.preset { height: 71px; display: flex; align-items: center; gap: 11px; padding: 0 0 4px 22px; border-bottom: 3px solid #2d2d2d; }
.preset select { height: 40px; width: auto; flex: 1; border: 2px solid #2f2f2f; border-right: 0; background: #1d1d1d; border-radius: 4px 0 0 4px; }
.blank { height: 63px; border-bottom: 2px solid #2d2d2d; }
.assign { padding: 42px 2px 0 42px; display: flex; flex-direction: column; gap: 20px; flex: 1; }
.assign p { line-height: 34px; height: 69px; }
.assign button { height: 60px; border: 2px solid #2f2f2f; border-right: 0; background: #1d1d1d; border-radius: 4px 0 0 4px; justify-content: flex-start; padding: 0 0 1px 223px; gap: 8px; color: var(--text); }
.assign .i { color: var(--icon); }
.hscroll { height: 26px; padding: 2px 2px; background: var(--well); border-bottom: 2px solid #2b2b2b; }
.hscroll span { display: block; width: 322px; height: 20px; border-radius: 10px; background: #323232; margin-left: 2px; }

.bottom { grid-column: 2 / 4; display: grid; grid-template-columns: minmax(0, 1fr) 510px; gap: 8px; }
.levels .tabs { padding-left: 25px; height: 66px; }
.range .tabs { padding-left: 24px; height: 58px; }
.meter { height: 82px; margin: 0 12px 0 10px; border: 2px solid #000; background: var(--well); display: grid; grid-template-columns: 1fr 18px; grid-template-rows: 1fr 1fr; }
.low { grid-row: 1 / 3; border-left: 2px solid #f2ee6a; margin-left: 2px; }
.clipcell { border-left: 2px solid #000; border-bottom: 2px solid #000; }
.clipcell.b { border-bottom: 0; }
.db { display: flex; justify-content: space-between; margin: 0 34px 0 15px; height: 40px; background: repeating-linear-gradient(90deg, #8a8a8a 0 2px, transparent 2px 5%) 0 0 / 100% 8px no-repeat; font-size: 18px; line-height: 24px; padding-top: 10px; }
.db span { width: 0; display: flex; justify-content: center; position: relative; }
.db span::before { content: ""; position: absolute; left: 22px; top: -10px; width: 24px; height: 4px; border: solid #707070; border-width: 0 2px; }
.db span:last-child::before { display: none; }
.db span:first-child { justify-content: flex-start; margin-left: -3px; }
.range table { margin-left: 22px; width: 484px; }
.range th, .range td { height: 41px; }
.range th:first-child, .range td:first-child { width: 58px; }
.range th:nth-child(2), .range th:nth-child(3) { width: 144px; }
.range tbody td { color: var(--blue); font-size: 22px; padding-left: 3px; }
.range thead td { padding: 0; }
.range thead th, .range thead td { height: 36px; }

.status { background: var(--panel); display: flex; align-items: center; position: relative; border-bottom: 1px solid #3a3a3a; white-space: nowrap; }
.state { padding-left: 16px; margin-right: auto; }
.dot { font-size: 13px; vertical-align: 2px; }
.cell { height: 24px; line-height: 24px; border-left: 2px solid #303030; padding-left: 16px; }
.cell.a { width: 100px; }
.cell.b { width: 236px; }
.cell.fmt { width: 409px; }
.cell.size { width: 135px; }
.cell.dur { width: 145px; padding-left: 34px; }
.cell.disk { width: 184px; padding-left: 15px; font-size: 23px; }
.cell.disk .num { font-size: 21px; }
.cell.end { width: 117px; }
.mark { position: absolute; right: 16px; bottom: 2px; font-size: 17px; color: #c0c0c0; }
```
FILE: app.js
```js
// Each clip: bursts are [from, to, level], spikes are [x, up, down], in timeline pixels.
const tracks = [
  { name: '轨道 1', color: '#20322c', bg: '#1e302b', wave: '#38ae86', width: 314,
    bursts: [[11,15,1],[37,54,5],[54,71,3],[85,112,4],[129,154,3],[154,187,4],[192,224,3],[231,238,1],[238,258,6],[258,300,4]],
    spikes: [[49,16,15],[89,13,12],[99,17,17],[129,21,23],[155,14,14],[163,27,25],[168,17,13],[178,12,13],[193,6,6],[205,8,6],[218,12,12],[240,6,5],[267,15,14],[283,21,18],[295,8,8]] },
  { name: '轨道 2', color: '#2c1f41', bg: '#332247', wave: '#a877e6', width: 328,
    bursts: [[5,8,1],[16,28,5],[28,70,3],[89,109,3],[115,121,1],[132,174,5],[175,183,3],[193,200,6],[200,230,4],[231,259,4],[261,276,3],[288,323,5]],
    spikes: [[22,16,15],[40,12,11],[46,8,8],[50,9,8],[62,22,22],[67,11,8],[90,8,8],[99,12,11],[140,26,25],[150,8,7],[156,6,7],[163,8,7],[178,26,27],[196,29,29],[204,8,6],[234,8,5],[262,6,6],[269,13,13],[290,5,4],[305,9,10]] },
  { name: '轨道 3', color: '#dabd40', bg: '#484014', wave: '#dfbc08', width: 422, picked: true,
    bursts: [[11,47,5],[47,77,3],[79,83,2],[95,116,5],[123,130,4],[145,185,4],[206,215,4],[222,255,5],[267,288,7],[294,328,5],[328,383,5],[383,394,2],[416,422,9]],
    spikes: [[14,19,20],[21,26,27],[33,9,11],[37,20,18],[43,9,9],[58,12,14],[106,8,8],[113,7,8],[157,7,6],[169,8,6],[173,7,7],[211,13,13],[225,9,12],[232,8,8],[243,12,12],[248,12,8],[272,19,19],[278,15,17],[285,8,8],[310,26,25],[331,14,15],[339,5,5],[354,4,5],[362,16,16],[371,6,6],[379,6,5]] },
  { name: '轨道 4', color: '#1e2f30', bg: '#084e52', wave: '#22d0d6', chosen: true,
    bursts: [[3,14,5],[25,46,6],[60,85,5],[96,120,6],[127,166,5],[180,239,5],[211,225,8],[239,252,2],[282,284,3],[308,316,5],[322,366,9],[368,379,6],[386,388,1],[439,463,4],[472,505,6],[530,581,6],[593,643,6],[663,681,6],[697,716,6],[740,755,5],[762,781,8],[784,795,9],[813,815,2],[835,879,6],[887,950,6]],
    spikes: [[28,22,22],[33,27,27],[42,11,11],[63,20,21],[80,8,8],[102,7,6],[113,7,6],[138,36,38],[154,18,18],[161,13,13],[182,30,34],[188,12,10],[199,8,8],[218,9,10],[334,24,24],[343,17,14],[349,32,28],[357,15,12],[363,10,10],[372,17,17],[376,25,15],[448,14,13],[454,21,23],[479,9,9],[490,9,9],[536,18,19],[553,14,18],[563,10,9],[573,14,18],[603,10,9],[619,27,28],[635,12,13],[667,8,7],[677,9,9],[699,8,8],[706,8,8],[742,23,25],[748,10,9],[753,10,8],[766,12,15],[769,33,30],[771,33,32],[788,13,10],[793,14,14],[838,9,9],[891,8,8],[896,17,15],[910,6,6],[930,24,24],[942,8,8]] },
];

function wavePath(track, width, mid) {
  let d = `M0 ${mid}H${width}`;
  for (let x = 0; x < width; x++) {
    let up = 0, down = 0;
    for (const [a, b, level] of track.bursts) {
      if (x >= a && x < b) {
        up = Math.max(up, level * (0.5 + 0.6 * Math.abs(Math.sin(x * 0.9) * Math.cos(x * 2.3))));
        down = up;
      }
    }
    for (const [sx, u, l] of track.spikes) {
      const k = x === sx ? 1 : x === sx + 1 ? 0.75 : x === sx - 1 ? 0.4 : 0;
      up = Math.max(up, u * k);
      down = Math.max(down, l * k);
    }
    if (up) d += `M${x + 0.5} ${Math.round(mid - up)}V${Math.round(mid + down)}`;
  }
  return d;
}

const icon = (id, cls = 'i') => `<svg class="${cls}"><use href="#${id}"/></svg>`;

function trackHtml(t) {
  const w = t.width || 949;
  return `
  <div class="head">
    <span class="strip"></span>
    <div class="ctl">
      <div class="row top">${icon('wave')}
        <label><input type="text" value="${t.name}" aria-label="轨道名称"></label>
        <button class="btn">M</button><button class="btn">S</button><button class="btn">R</button><button class="btn off">I</button>
      </div>
      <div class="low-part">
        <div>
          <div class="row mix">${icon('vol')}${icon('knob', 'i k1')}<span class="v1">+0</span>${icon('pan')}${icon('knob', 'i k2')}<span class="v2">0</span>${icon('mono')}</div>
          <div class="row route"><span class="arrow">${icon('right')}</span><label class="pick"><select aria-label="输入"><option>无</option></select>${icon('chevr', 'c')}</label><button class="btn">${icon('phase')}</button></div>
          <div class="row route"><span class="arrow">${icon('left')}</span><label class="pick"><select aria-label="输出"><option>混合</option></select>${icon('chevr', 'c')}</label></div>
          <div class="row route auto"><span class="arrow">${icon('chevr', 'c')}</span><label class="pick"><select aria-label="自动化"><option>读取</option></select>${icon('chevd', 'c')}</label></div>
        </div>
        <div class="vu"></div>
      </div>
    </div>
  </div>
  <div class="lane">
    <div class="clip" style="width:${t.width ? w + 'px' : '100%'}">
      <div class="cliphead"><b>被怪盗盯上的新娘</b>${t.chosen ? '' : '声像 ' + icon('chevd', 'c')}</div>
      <svg class="wave" width="${w}" height="240" viewBox="0 28 ${w} 240"><path fill="none" stroke="currentColor" shape-rendering="crispEdges" d="${wavePath(t, w, 87.5)}${wavePath(t, w, 207.5)}"/></svg>
      <span class="env"></span><span class="env pan"></span>
      ${t.chosen ? '<span class="fade"></span>' : icon('signal', 'sig')}
    </div>
  </div>`;
}

const host = document.getElementById('tracks');
tracks.forEach((t) => {
  const el = document.createElement('div');
  el.className = 'track' + (t.picked ? ' picked' : '') + (t.chosen ? ' chosen' : '');
  el.style.cssText = `--c:${t.color};--bg:${t.bg};--w:${t.wave}`;
  el.innerHTML = trackHtml(t);
  host.append(el);
});

const db = document.getElementById('db');
for (let v = -60; v <= 0; v += 3) {
  const s = document.createElement('span');
  s.textContent = v === -60 ? 'dB' : v;
  db.append(s);
}
```
